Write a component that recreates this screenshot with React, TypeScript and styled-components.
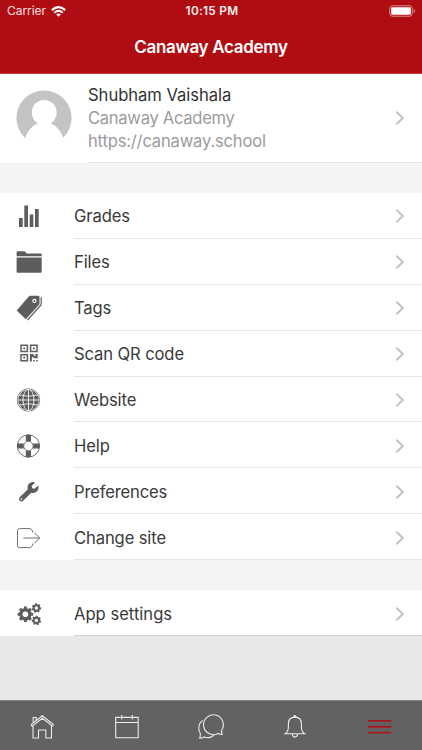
import React from 'react';
import styled, { createGlobalStyle } from 'styled-components';
import { FaWrench } from 'react-icons/fa';

const GlobalStyle = createGlobalStyle`
  * { box-sizing: border-box; }
  body { margin: 0; background: #e8e8e8; font-family: Inter, "Liberation Sans", sans-serif; }
`;

const Screen = styled.div`
  width: 422px;
  height: 750px;
  display: flex;
  flex-direction: column;
  overflow: hidden;
  background: #e8e8e8;
  color: #3a3a3a;
`;

const Header = styled.header`
  height: 74px;
  flex: none;
  background: #b00d12;
  border-bottom: 1px solid #c9383c;
  color: #fff;
`;

const StatusBar = styled.div`
  height: 22px;
  padding: 0 6px 0 7px;
  display: grid;
  grid-template-columns: 1fr auto 1fr;
  align-items: center;
  font-size: 12px;
  line-height: 22px;
`;

const Carrier = styled.div`
  display: flex;
  align-items: center;
  gap: 5px;
  letter-spacing: -0.05px;
  color: #fbe3e3;
`;

const Clock = styled.div`
  font-weight: 600;
  font-size: 11.8px;
  letter-spacing: 0.3px;
  padding-left: 1px;
  color: #fdeeee;
`;

const BatterySlot = styled.div`
  display: flex;
  justify-content: flex-end;
`;

const Title = styled.h1`
  margin: 0;
  height: 50px;
  line-height: 50px;
  text-align: center;
  font-size: 17px;
  font-weight: 600;
  letter-spacing: -0.3px;
`;

const Profile = styled.section`
  height: 89px;
  flex: none;
  display: flex;
  padding-left: 16px;
  background: #fff;
`;

const Avatar = styled.svg`
  flex: none;
  width: 56px;
  height: 56px;
  margin: 16px 16px 0 0;
`;

const ProfileBody = styled.div`
  flex: 1;
  display: flex;
  align-items: center;
  justify-content: space-between;
  padding-right: 17px;
  border-bottom: 1px solid #e6e6e6;
`;

const Lines = styled.div`
  font-size: 16.6px;
  line-height: 23px;
`;

const Line = styled.div<{ $primary?: boolean; $spacing: number }>`
  letter-spacing: ${(p) => p.$spacing}px;
  color: ${(p) => (p.$primary ? '#333' : '#9b9b9b')};
`;

const Gap = styled.div`
  height: 30px;
  flex: none;
  background: #f4f4f4;
`;

const List = styled.section<{ $height: number }>`
  height: ${(p) => p.$height}px;
  flex: none;
  display: flex;
  flex-direction: column;
  background: #fff;
`;

const Row = styled.div`
  flex: 1;
  min-height: 0;
  display: flex;
  align-items: stretch;
  padding-left: 14px;
`;

const IconSlot = styled.div`
  width: 60px;
  flex: none;
  display: flex;
  align-items: center;
  padding-top: 1px;
  color: #5d5d5d;
`;

const RowBody = styled.div<{ $spacing: number; $last?: boolean }>`
  flex: 1;
  display: flex;
  align-items: center;
  justify-content: space-between;
  padding: 2px 17px 0 0;
  border-bottom: 1px solid ${(p) => (p.$last ? '#d2d2d2' : '#e6e6e6')};
  font-size: 16.6px;
  letter-spacing: ${(p) => p.$spacing}px;
`;

const TabBar = styled.nav`
  margin-top: auto;
  height: 50px;
  flex: none;
  display: flex;
  background: #626262;
  border-top: 1px solid #818181;
`;

const Tab = styled.div<{ $active?: boolean }>`
  flex: 1;
  display: flex;
  align-items: center;
  justify-content: center;
  padding-top: 3px;
  color: ${(p) => (p.$active ? '#a51a20' : '#ececec')};
`;

const Glyph = styled.svg.attrs({ width: 30, height: 30, viewBox: '0 0 30 30', fill: 'none' })`
  display: block;
  flex: none;
`;

const WrenchSlot = styled.div`
  width: 30px;
  height: 30px;
  padding: 5.5px 0 0 5px;
`;

const Chevron = () => (
  <svg width="10" height="16" viewBox="0 0 10 16" fill="none">
    <path d="M1.3 1.8 7.8 8 1.3 14.2" stroke="#c3c3c6" strokeWidth="2" />
  </svg>
);

const Wifi = () => (
  <svg width="15" height="11" viewBox="0 0 15 11" fill="none" stroke="#fff" strokeWidth="2.1">
    <path d="M.8 4.1Q7.5-1.8 14.2 4.1" />
    <path d="M3.3 6.7q4.2-3.5 8.4 0" />
    <path d="M7.5 10.7 5.2 8.5q2.3-1.9 4.6 0z" fill="#fff" stroke="none" />
  </svg>
);

const Battery = () => (
  <svg width="27" height="12" viewBox="0 0 27 12" fill="none">
    <rect x=".8" y=".8" width="22.4" height="10.4" rx="2.6" stroke="#df8e90" />
    <rect x="2.2" y="2.2" width="19.6" height="7.6" rx="1.3" fill="#fff" />
    <path d="M24.6 4v4q1.4-.7 1.4-2t-1.4-2z" fill="#df8e90" />
  </svg>
);

const Grades = () => (
  <Glyph>
    <path fill="currentColor" d="M5 17h3.7v9H5zM10.3 4.5H14V26h-3.7zM15.7 13.5h3.6V26h-3.6zM21 8h3.7v18H21z" />
  </Glyph>
);

const Folder = () => (
  <Glyph>
    <path fill="currentColor" d="M2.6 9.3V5.5q0-1.2 1.2-1.2h6.4q.7 0 1.2.7l1.2 1.4h13.9q1.2 0 1.2 1.2v1.7z" />
    <path fill="currentColor" d="M2.6 10.5h25.1v14q0 1.2-1.2 1.2H3.8q-1.2 0-1.2-1.2z" />
  </Glyph>
);

const Tags = () => (
  <Glyph>
    <path
      fill="currentColor"
      fillRule="evenodd"
      d="M16.2 2.7h8.3q1 0 1 1v6.9q0 .7-.4 1.2L11.8 26.3 2.7 17.6 15 3.3q.5-.6 1.2-.6zm4.2 3.1a2.1 2.1 0 1 0 0 4.2 2.1 2.1 0 0 0 0-4.2z"
    />
    <path stroke="currentColor" strokeWidth="1.2" d="M27.2 4.2v7.5L13.5 27" />
    <circle cx="20.4" cy="7.9" r="1" fill="currentColor" />
  </Glyph>
);

const Qr = () => (
  <Glyph>
    <g stroke="currentColor" strokeWidth="1.5">
      <path d="M7 6.2h6.4v6.2H7zM16.6 6.2H23v6.2h-6.4zM7 15.7h6.4v6.1H7z" />
    </g>
    <path
      fill="currentColor"
      d="M9.3 8.4h1.8v1.8H9.3zM18.9 8.4h1.8v1.8h-1.8zM9.3 17.8h1.8v1.8H9.3zM15.9 15h3.8v1.7h1.8V15h2.2v4.3h-4v-1h-1.8v4.2h-2zM19.2 20.9h1.6v1.6h-1.6zM22.1 20.9h1.6v1.6h-1.6z"
    />
  </Glyph>
);

const Globe = () => (
  <Glyph>
    <circle cx="14.5" cy="15" r="11.2" stroke="currentColor" strokeWidth=".8" />
    <circle cx="14.5" cy="15" r="10.3" fill="currentColor" />
    <g stroke="#fff" strokeWidth=".85">
      <path d="M14.5 4v22M3.5 15h22M5 9.9q9.5 2.8 19 0M5 20.1q9.5-2.8 19 0" />
      <ellipse cx="14.5" cy="15" rx="5.5" ry="10.7" />
    </g>
  </Glyph>
);

const Buoy = () => (
  <Glyph>
    <circle cx="14.4" cy="15" r="11.1" stroke="currentColor" strokeWidth=".9" />
    <circle cx="14.4" cy="15" r="4.7" stroke="currentColor" strokeWidth=".8" />
    <path
      fill="currentColor"
      d="M11.8 3.9q2.6-.8 5.2 0v6.7q-2.6-1.2-5.2 0zM11.8 26.1q2.6.8 5.2 0v-6.7q-2.6 1.2-5.2 0zM3.3 12.4q-.8 2.6 0 5.2H10q-1.2-2.6 0-5.2zM25.5 12.4q.8 2.6 0 5.2h-6.7q1.2-2.6 0-5.2z"
    />
  </Glyph>
);

const Wrench = () => (
  <WrenchSlot>
    <FaWrench size={19.5} />
  </WrenchSlot>
);

const Exit = () => (
  <Glyph>
    <path
      stroke="#707070"
      strokeWidth="1"
      d="M18.6 9.5V8q-1.6-2.4-2.4-2.4H5.5q-2 0-2 2v15q0 2 2 2h10.7q1 0 2.4-2.4v-1.5M9.3 15h16.4M20.5 9.8l5.2 5.2-5.2 5.2"
    />
  </Glyph>
);

/** Outline of a cog wheel with square teeth and a round hub hole. */
const cog = (cx: number, cy: number, r: number, hole: number, teeth: number, turn = 0) => {
  const step = (Math.PI * 2) / teeth;
  const pts: string[] = [];
  for (let i = 0; i < teeth; i++) {
    const a = i * step + turn;
    [
      [-0.32, 0.79],
      [-0.23, 1],
      [0.23, 1],
      [0.32, 0.79],
    ].forEach(([o, k]) => {
      const t = a + o * step;
      pts.push(`${(cx + Math.cos(t) * r * k).toFixed(2)} ${(cy + Math.sin(t) * r * k).toFixed(2)}`);
    });
  }
  return `M${pts.join('L')}ZM${cx - hole} ${cy}a${hole} ${hole} 0 1 0 ${hole * 2} 0a${hole} ${hole} 0 1 0 ${-hole * 2} 0Z`;
};

const Cogs = () => (
  <Glyph>
    <g fill="currentColor" fillRule="evenodd">
      <path d={cog(11.4, 15.3, 7.9, 2.8, 8)} />
      <path d={cog(22.4, 9, 4.8, 1.7, 7, 0.1)} />
      <path d={cog(22.4, 21.4, 4.8, 1.7, 7, 0.3)} />
    </g>
  </Glyph>
);

const Home = () => (
  <Glyph>
    <path
      stroke="currentColor"
      strokeWidth="1.1"
      d="M4.4 12.5 15.3 3.7l11 8.8M4.4 14.2v-1.7M26.3 12.5v1.2M5 14.4l10.3-8.2 10.4 8.2M6.2 11.2V5.5h3v3M6 13.4V26h5.5v-8h7.3v8h5.7V13.4"
    />
  </Glyph>
);

const Calendar = () => (
  <Glyph>
    <path stroke="currentColor" strokeWidth="1.1" d="M3.7 5.4h22.5v20.4H3.7zM3.7 10.5h22.5M9.7 3v4.5M20.3 3v4.5" />
  </Glyph>
);

const Chat = () => (
  <Glyph>
    <path
      stroke="currentColor"
      strokeWidth="1.1"
      d="M26.2 22.5q-2.1-.1-4-1.1A9.9 9.9 0 1 1 25.8 18q-.8 1.5.4 4.5zM6.8 8.5Q2.8 11 2.8 16q0 3.2 1.4 5.1.6 1.7-.5 5.1 2.6 0 4.5-1.2 5.4 2.2 9.9-2"
    />
  </Glyph>
);

const Bell = () => (
  <Glyph>
    <path
      stroke="currentColor"
      strokeWidth="1.1"
      d="M5.2 21.8q3.2-2 3.2-7.4v-2.6q0-6.7 6.5-6.7t6.5 6.7v2.6q0 5.4 3.2 7.4zM12.4 22.3q.2 2.8 2.5 2.8t2.5-2.8"
    />
    <circle cx="14.9" cy="4.4" r="1.5" fill="currentColor" />
  </Glyph>
);

const Menu = () => (
  <Glyph>
    <path stroke="currentColor" strokeWidth="1.9" d="M3 8.9h23.3M3 14.8h23.3M3 20.6h23.3" />
  </Glyph>
);

const items: { label: string; Icon: React.FC; spacing: number }[] = [
  { label: 'Grades', Icon: Grades, spacing: -0.1 },
  { label: 'Files', Icon: Folder, spacing: -0.1 },
  { label: 'Tags', Icon: Tags, spacing: -0.2 },
  { label: 'Scan QR code', Icon: Qr, spacing: -0.12 },
  { label: 'Website', Icon: Globe, spacing: -0.12 },
  { label: 'Help', Icon: Buoy, spacing: -0.1 },
  { label: 'Preferences', Icon: Wrench, spacing: -0.16 },
  { label: 'Change site', Icon: Exit, spacing: -0.12 },
];

const tabs: { Icon: React.FC; active?: boolean }[] = [
  { Icon: Home },
  { Icon: Calendar },
  { Icon: Chat },
  { Icon: Bell },
  { Icon: Menu, active: true },
];

export default function App() {
  return (
    <Screen>
      <GlobalStyle />
      <Header>
        <StatusBar>
          <Carrier>
            Carrier <Wifi />
          </Carrier>
          <Clock>10:15 PM</Clock>
          <BatterySlot>
            <Battery />
          </BatterySlot>
        </StatusBar>
        <Title>Canaway Academy</Title>
      </Header>
      <Profile>
        <Avatar viewBox="0 0 56 56">
          <circle cx="28" cy="28" r="27.6" fill="#c4c4c4" />
          <ellipse cx="28.2" cy="22.6" rx="12.4" ry="12.7" fill="#fff" />
          <path fill="#fff" d="M8.7 48.6Q13 37 21.5 33.5h13.4q8.500 3.500 12.800 15.100V56H8.700z" />
        </Avatar>
        <ProfileBody>
          <Lines>
            <Line $primary $spacing={-0.04}>Shubham Vaishala</Line>
            <Line $spacing={-0.3}>Canaway Academy</Line>
            <Line $spacing={-0.19}>https://canaway.school</Line>
          </Lines>
          <Chevron />
        </ProfileBody>
      </Profile>
      <Gap />
      <List $height={367}>
        {items.map(({ label, Icon, spacing }) => (
          <Row key={label}>
            <IconSlot>
              <Icon />
            </IconSlot>
            <RowBody $spacing={spacing}>
              {label}
              <Chevron />
            </RowBody>
          </Row>
        ))}
      </List>
      <Gap />
      <List $height={46}>
        <Row>
          <IconSlot>
            <Cogs />
          </IconSlot>
          <RowBody $spacing={0} $last>
            App settings
            <Chevron />
          </RowBody>
        </Row>
      </List>
      <TabBar>
        {tabs.map(({ Icon, active }, i) => (
          <Tab key={i} $active={active}>
            <Icon />
          </Tab>
        ))}
      </TabBar>
    </Screen>
  );
}
